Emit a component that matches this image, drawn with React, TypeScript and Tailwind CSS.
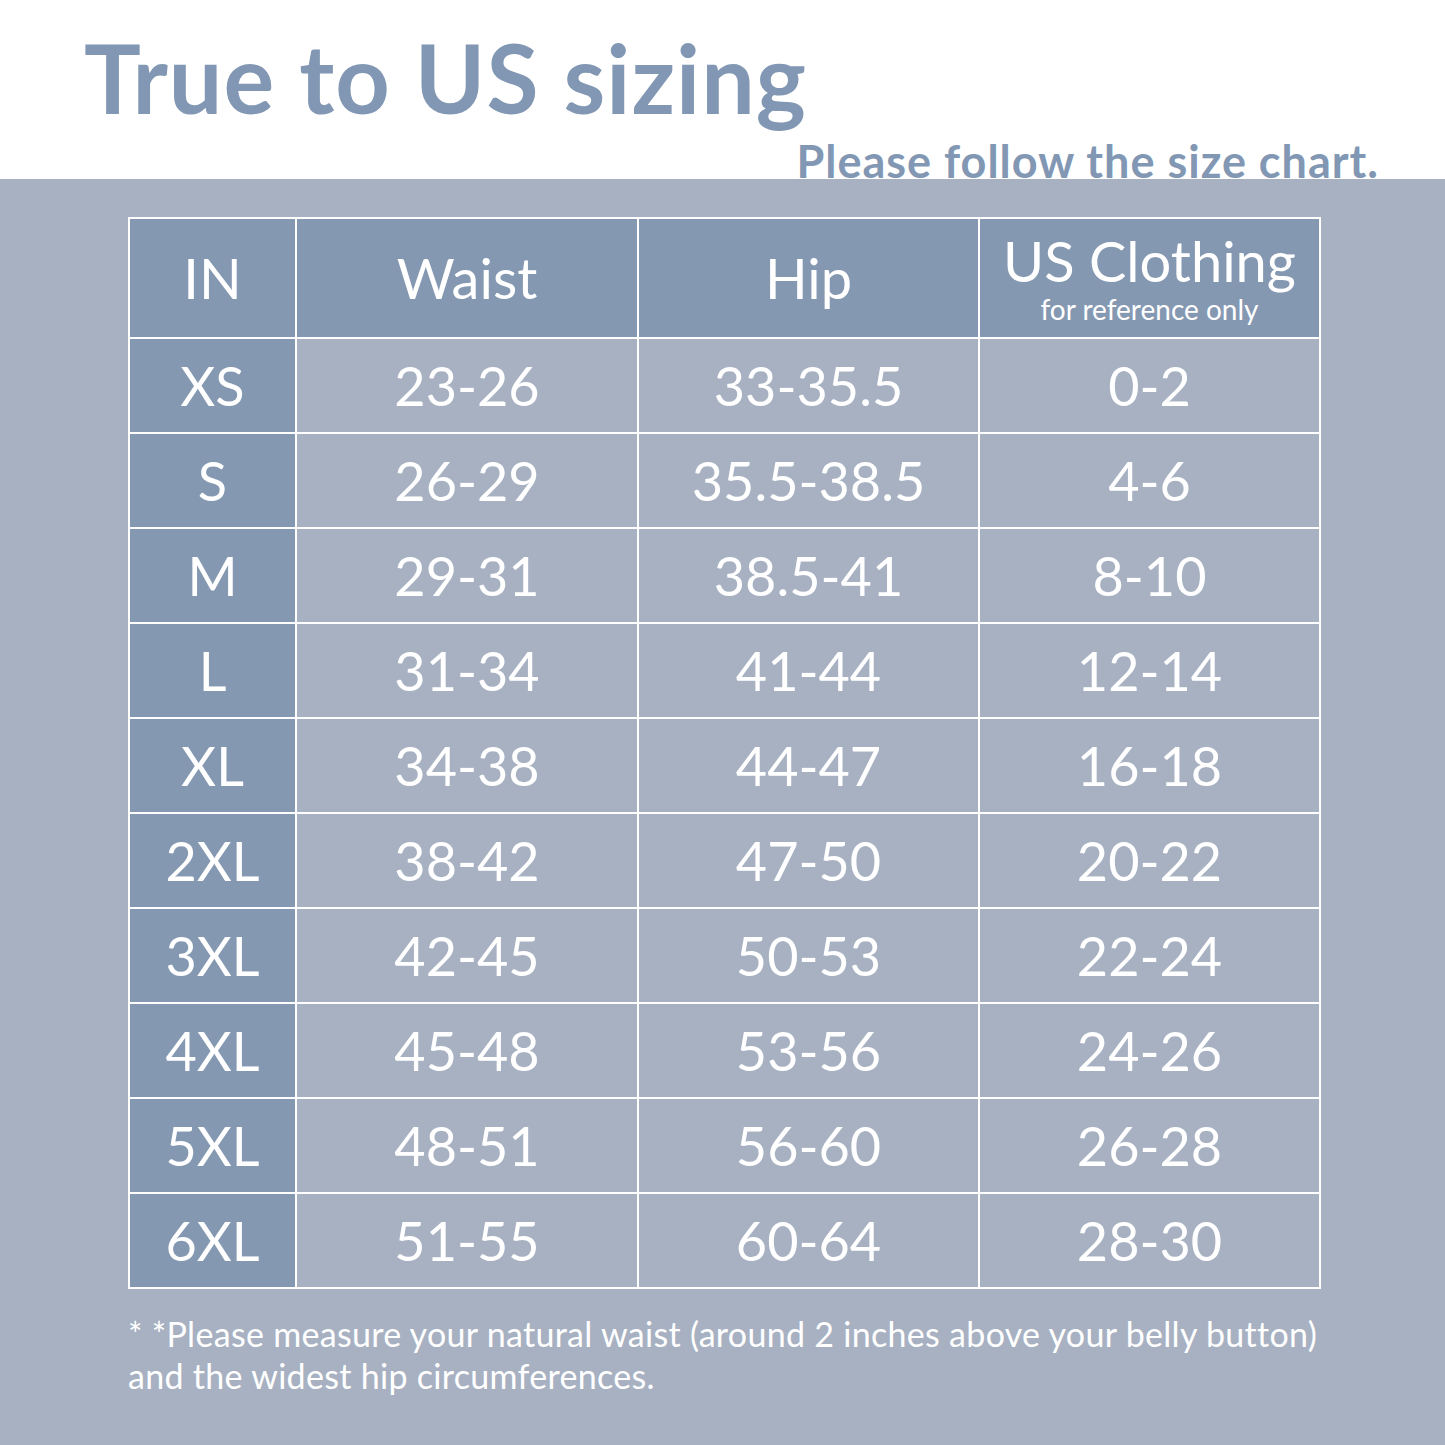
const rows: [string, string, string, string][] = [
  ["XS", "23-26", "33-35.5", "0-2"],
  ["S", "26-29", "35.5-38.5", "4-6"],
  ["M", "29-31", "38.5-41", "8-10"],
  ["L", "31-34", "41-44", "12-14"],
  ["XL", "34-38", "44-47", "16-18"],
  ["2XL", "38-42", "47-50", "20-22"],
  ["3XL", "42-45", "50-53", "22-24"],
  ["4XL", "45-48", "53-56", "24-26"],
  ["5XL", "48-51", "56-60", "26-28"],
  ["6XL", "51-55", "60-64", "28-30"],
];

export default function App() {
  return (
    <div className="w-[1445px] h-[1445px] bg-white font-['Lato',sans-serif] overflow-hidden">
      <div className="relative h-[179px]">
        <h1 className="absolute left-[84px] top-[30px] text-[95px] font-bold leading-none tracking-[1px] text-[#8197b3]">
          True to US sizing
        </h1>
        <p className="absolute right-[66px] top-[139px] text-[45px] font-bold leading-none tracking-[1px] text-[#8197b3]">
          Please follow the size chart.
        </p>
      </div>
      <div className="h-[1266px] bg-[#a7b1c2] pt-[38px] pl-[128px]">
        <div className="grid w-[1193px] grid-cols-[165px_340px_339px_339px] grid-rows-[118px_repeat(10,93px)] gap-[2px] bg-white p-[2px] text-white">
          <div className="flex items-center justify-center bg-[#8598b2] text-[56px] leading-none">IN</div>
          <div className="flex items-center justify-center bg-[#8598b2] text-[56px] leading-none">Waist</div>
          <div className="flex items-center justify-center bg-[#8598b2] text-[56px] leading-none">Hip</div>
          <div className="flex flex-col items-center justify-center bg-[#8598b2] leading-none">
            <span className="text-[56px]">US Clothing</span>
            <span className="mt-[6px] text-[28px]">for reference only</span>
          </div>
          {rows.map((r) => (
            <>
              <div key={r[0] + "a"} className="flex items-center justify-center bg-[#8598b2] text-[54px] leading-none">
                {r[0]}
              </div>
              <div key={r[0] + "b"} className="flex items-center justify-center bg-[#a7b1c2] text-[54px] leading-none">
                {r[1]}
              </div>
              <div key={r[0] + "c"} className="flex items-center justify-center bg-[#a7b1c2] text-[54px] leading-none">
                {r[2]}
              </div>
              <div key={r[0] + "d"} className="flex items-center justify-center bg-[#a7b1c2] text-[54px] leading-none">
                {r[3]}
              </div>
            </>
          ))}
        </div>
        <p className="mt-[24px] w-[1240px] text-[34px] leading-[42px] tracking-[0.3px] text-white">
          * *Please measure your natural waist (around 2 inches above your belly button)
          <br />
          and the widest hip circumferences.
        </p>
      </div>
    </div>
  );
}
